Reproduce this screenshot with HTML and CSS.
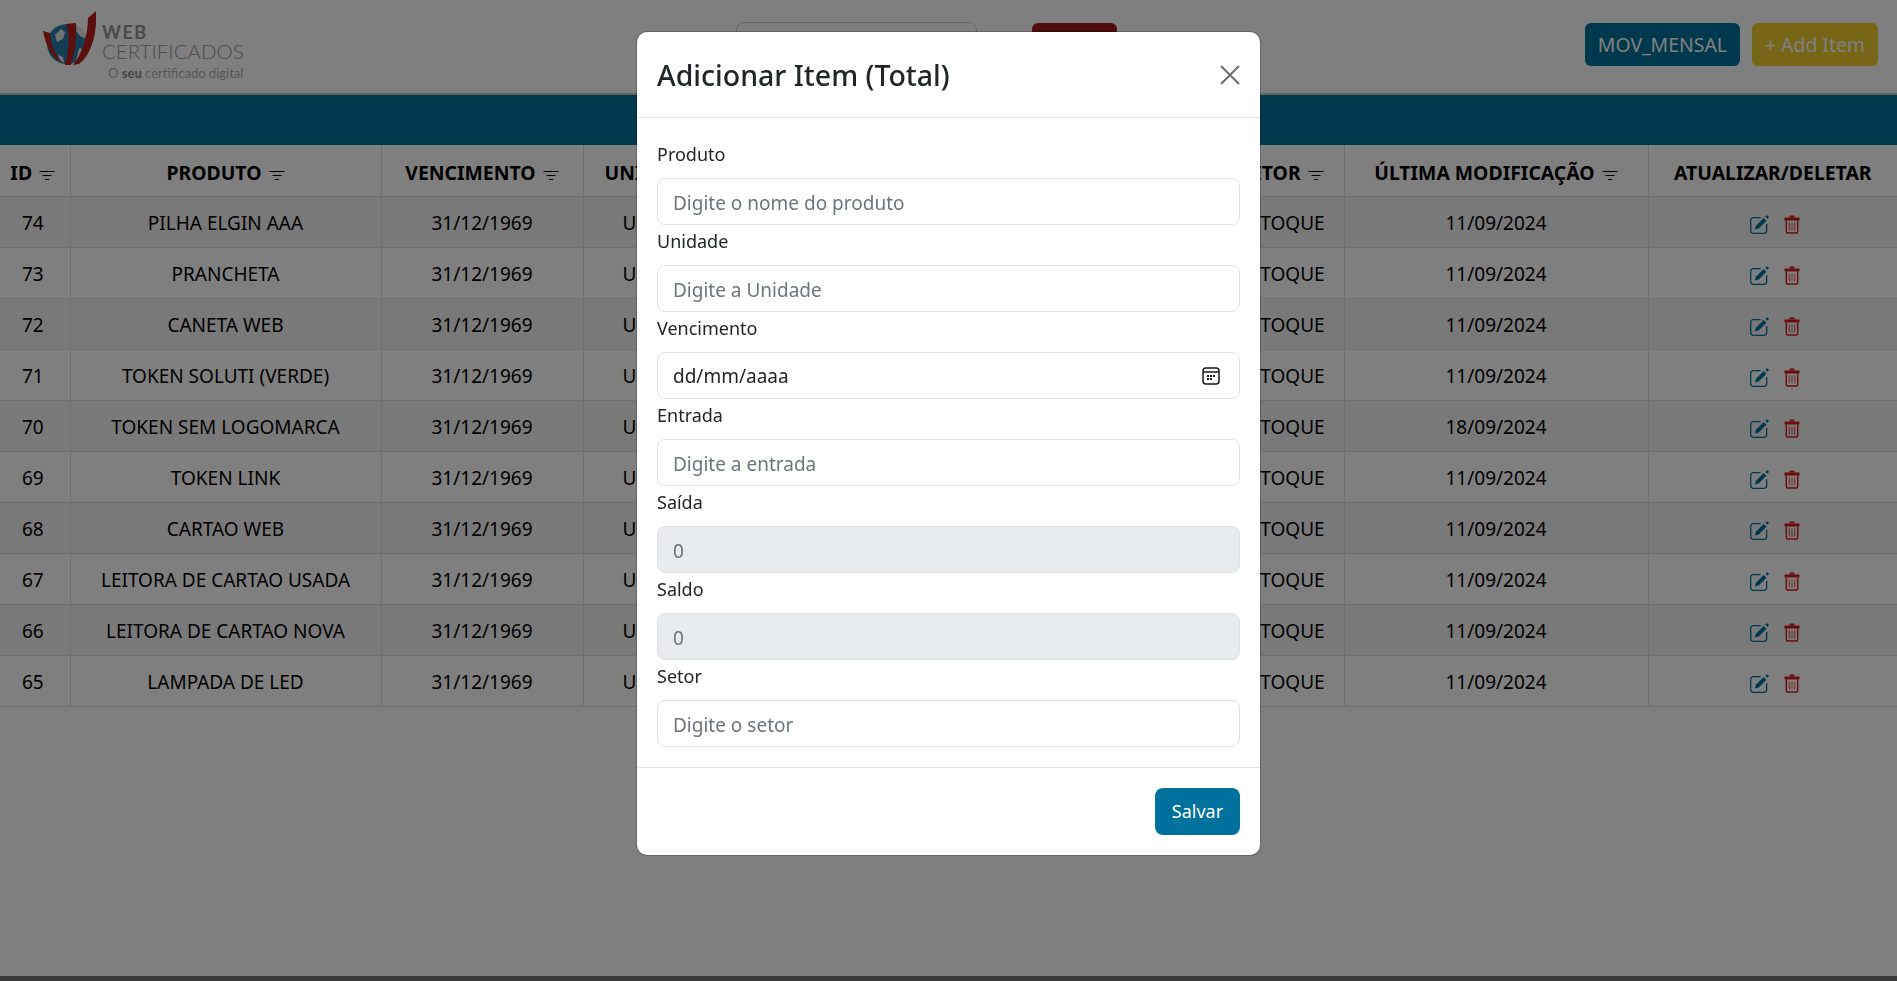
FILE: index.html
```html
<!DOCTYPE html>
<html lang="pt-BR">
<head>
<meta charset="UTF-8">
<meta name="viewport" content="width=device-width, initial-scale=1.0">
<title>Web Certificados - Estoque</title>
<link rel="stylesheet" href="styles.css">
</head>
<body>

<svg class="sprites" width="0" height="0">
    <symbol id="i-filter" viewBox="0 0 16 16">
        <path d="M0.500 4.500h15M3.500 8.500h9M6 12.500h4" fill="none" stroke="currentColor" stroke-width="1.200"/>
    </symbol>
    <symbol id="i-edit" viewBox="0 0 18 18">
        <path d="M10 2.500H3A2.300 2.300 0 0 0 0.700 4.800V15a2.300 2.300 0 0 0 2.300 2.300h10.500a2.300 2.300 0 0 0 2.300-2.300V8.500" fill="none" stroke="currentColor" stroke-width="1.200"/>
        <path d="M13 2.800l2.600 2.600-7.400 7.400-3.600 1 1-3.600z" fill="currentColor"/>
        <circle cx="16.300" cy="1.800" r="1.400" fill="currentColor"/>
    </symbol>
    <symbol id="i-trash" viewBox="0 0 16 19">
        <path d="M5.500 0.500h5v2h-5z" fill="currentColor"/>
        <path d="M0.500 2.500h15v3h-15z" fill="currentColor"/>
        <path d="M2.300 5.500v11a1.500 1.500 0 0 0 1.500 1.500h8.400a1.500 1.500 0 0 0 1.500-1.500v-11" fill="none" stroke="currentColor" stroke-width="1.400"/>
        <path d="M5.300 7.500v8M8 7.500v8M10.700 7.500v8" fill="none" stroke="currentColor" stroke-width="1.300" opacity=".6"/>
    </symbol>
</svg>

<div class="page">
    <nav class="navbar">
        <div class="logo">
            <svg class="logo-mark" viewBox="0 0 53 54">
                <circle cx="24" cy="33" r="20" fill="#267ca8"/>
                <path d="M12 24l6-6 4 3-2 7-6 3zM33 15l7 3 3 10-6-3-4-5zM15 44l5 2 1 6-4-2zM36 37l4 1-5 11-2 1z" fill="#e4e4e4"/>
                <path d="M0 20l7 2c1 12 5 22 13 30C10 48 3 36 0 20z" fill="#b81e1e"/>
                <path d="M23 13l10-1c1 16-1 30-5 42l-6 0c4-14 5-28 1-41z" fill="#b81e1e"/>
                <path d="M53 0c1 20-3 42-17 53l-6 1c10-12 15-32 15-47z" fill="#b81e1e"/>
            </svg>
            <div class="logo-text">
                <span class="logo-web">WEB</span>
                <span class="logo-cert">CERTIFICADOS</span>
                <span class="logo-tag">O <b>seu</b> certificado digital</span>
            </div>
        </div>
        <input class="nav-search" type="text">
        <button class="nav-red">Buscar</button>
        <div class="nav-actions">
            <button class="btn btn-primary">MOV_MENSAL</button>
            <button class="btn btn-yellow">+ Add Item</button>
        </div>
    </nav>

    <div class="band"></div>

    <table class="stock">
        <thead>
            <tr>
                <th class="col-id">ID <svg class="filter"><use href="#i-filter"/></svg></th>
                <th class="col-prod">PRODUTO <svg class="filter"><use href="#i-filter"/></svg></th>
                <th class="col-venc">VENCIMENTO <svg class="filter"><use href="#i-filter"/></svg></th>
                <th class="col-uni">UNIDADE <svg class="filter"><use href="#i-filter"/></svg></th>
                <th class="col-num">ENTRADA <svg class="filter"><use href="#i-filter"/></svg></th>
                <th class="col-num">SAÍDA <svg class="filter"><use href="#i-filter"/></svg></th>
                <th class="col-setor">SETOR <svg class="filter"><use href="#i-filter"/></svg></th>
                <th class="col-mod">ÚLTIMA MODIFICAÇÃO <svg class="filter"><use href="#i-filter"/></svg></th>
                <th class="col-act">ATUALIZAR/DELETAR</th>
            </tr>
        </thead>
        <tbody>
            <tr><td>74</td><td>PILHA ELGIN AAA</td><td>31/12/1969</td><td>UNIDADE</td><td>10</td><td>0</td><td>ESTOQUE</td><td>11/09/2024</td><td class="actions"><svg class="ic-edit"><use href="#i-edit"/></svg><svg class="ic-trash"><use href="#i-trash"/></svg></td></tr>
            <tr><td>73</td><td>PRANCHETA</td><td>31/12/1969</td><td>UNIDADE</td><td>10</td><td>0</td><td>ESTOQUE</td><td>11/09/2024</td><td class="actions"><svg class="ic-edit"><use href="#i-edit"/></svg><svg class="ic-trash"><use href="#i-trash"/></svg></td></tr>
            <tr><td>72</td><td>CANETA WEB</td><td>31/12/1969</td><td>UNIDADE</td><td>10</td><td>0</td><td>ESTOQUE</td><td>11/09/2024</td><td class="actions"><svg class="ic-edit"><use href="#i-edit"/></svg><svg class="ic-trash"><use href="#i-trash"/></svg></td></tr>
            <tr><td>71</td><td>TOKEN SOLUTI (VERDE)</td><td>31/12/1969</td><td>UNIDADE</td><td>10</td><td>0</td><td>ESTOQUE</td><td>11/09/2024</td><td class="actions"><svg class="ic-edit"><use href="#i-edit"/></svg><svg class="ic-trash"><use href="#i-trash"/></svg></td></tr>
            <tr><td>70</td><td>TOKEN SEM LOGOMARCA</td><td>31/12/1969</td><td>UNIDADE</td><td>10</td><td>0</td><td>ESTOQUE</td><td>18/09/2024</td><td class="actions"><svg class="ic-edit"><use href="#i-edit"/></svg><svg class="ic-trash"><use href="#i-trash"/></svg></td></tr>
            <tr><td>69</td><td>TOKEN LINK</td><td>31/12/1969</td><td>UNIDADE</td><td>10</td><td>0</td><td>ESTOQUE</td><td>11/09/2024</td><td class="actions"><svg class="ic-edit"><use href="#i-edit"/></svg><svg class="ic-trash"><use href="#i-trash"/></svg></td></tr>
            <tr><td>68</td><td>CARTAO WEB</td><td>31/12/1969</td><td>UNIDADE</td><td>10</td><td>0</td><td>ESTOQUE</td><td>11/09/2024</td><td class="actions"><svg class="ic-edit"><use href="#i-edit"/></svg><svg class="ic-trash"><use href="#i-trash"/></svg></td></tr>
            <tr><td>67</td><td>LEITORA DE CARTAO USADA</td><td>31/12/1969</td><td>UNIDADE</td><td>10</td><td>0</td><td>ESTOQUE</td><td>11/09/2024</td><td class="actions"><svg class="ic-edit"><use href="#i-edit"/></svg><svg class="ic-trash"><use href="#i-trash"/></svg></td></tr>
            <tr><td>66</td><td>LEITORA DE CARTAO NOVA</td><td>31/12/1969</td><td>UNIDADE</td><td>10</td><td>0</td><td>ESTOQUE</td><td>11/09/2024</td><td class="actions"><svg class="ic-edit"><use href="#i-edit"/></svg><svg class="ic-trash"><use href="#i-trash"/></svg></td></tr>
            <tr><td>65</td><td>LAMPADA DE LED</td><td>31/12/1969</td><td>UNIDADE</td><td>10</td><td>0</td><td>ESTOQUE</td><td>11/09/2024</td><td class="actions"><svg class="ic-edit"><use href="#i-edit"/></svg><svg class="ic-trash"><use href="#i-trash"/></svg></td></tr>
        </tbody>
    </table>

    <footer class="footer"></footer>
</div>

<div class="backdrop">
    <div class="modal">
        <div class="modal-header">
            <h2 class="modal-title">Adicionar Item (Total)</h2>
            <svg class="modal-close" viewBox="0 0 20 20"><path d="M1 1l18 18M19 1L1 19" fill="none" stroke="currentColor" stroke-width="2"/></svg>
        </div>
        <form class="modal-body">
            <label for="produto">Produto</label>
            <input class="form-control" id="produto" type="text" placeholder="Digite o nome do produto">
            <label for="unidade">Unidade</label>
            <input class="form-control" id="unidade" type="text" placeholder="Digite a Unidade">
            <label for="vencimento">Vencimento</label>
            <div class="form-control date-field" id="vencimento">
                <span>dd/mm/aaaa</span>
                <svg class="cal" viewBox="0 0 18 18">
                    <rect x="1" y="1" width="16" height="16" rx="3" fill="none" stroke="#1a1a1a" stroke-width="1.500"/>
                    <path d="M1 5h16" stroke="#1a1a1a" stroke-width="1.500"/>
                    <path d="M5 8h2v2H5zM8 8h2v2H8zM11 8h2v2h-2zM5 11h2v2H5zM8 11h2v2H8z" fill="#1a1a1a"/>
                </svg>
            </div>
            <label for="entrada">Entrada</label>
            <input class="form-control" id="entrada" type="text" placeholder="Digite a entrada">
            <label for="saida">Saída</label>
            <input class="form-control" id="saida" type="text" value="0" disabled>
            <label for="saldo">Saldo</label>
            <input class="form-control" id="saldo" type="text" value="0" disabled>
            <label for="setor">Setor</label>
            <input class="form-control" id="setor" type="text" placeholder="Digite o setor">
        </form>
        <div class="modal-footer">
            <button class="btn btn-primary btn-save">Salvar</button>
        </div>
    </div>
</div>

</body>
</html>
```

FILE: styles.css
```css
* {
    box-sizing: border-box;
}
body {
    margin: 0;
    background-color: #fff;
    color: #000;
    font-family: "Noto Sans", "Open Sans", Arial, sans-serif;
    font-size: 18px;
    line-height: 27px;
    overflow: hidden;
}
.sprites {
    position: absolute;
}
.page {
    display: flex;
    flex-direction: column;
    height: 981px;
}

/* top bar */
.navbar {
    display: flex;
    align-items: flex-start;
    height: 95px;
    padding: 23px 19px 0 43px;
    border-bottom: 2px solid #c8c8c8;
}
.logo {
    display: flex;
    width: 201px;
    margin-top: -12px;
}
.logo-mark {
    width: 53px;
    height: 54px;
    flex: none;
}
.logo-text {
    display: flex;
    flex-direction: column;
    margin: 12px 0 0 6px;
    color: #a8a8a8;
    font-family: Lato, sans-serif;
    white-space: nowrap;
}
.logo-web {
    font-size: 18px;
    line-height: 18px;
    font-weight: 700;
    letter-spacing: 1.500px;
    color: #969696;
}
.logo-cert {
    font-size: 20.500px;
    line-height: 20px;
    font-weight: 300;
    color: #9a9a9a;
}
.logo-tag {
    font-size: 13px;
    line-height: 16px;
    margin: 4px 0 0 6px;
    color: #b0b0b0;
}
.logo-tag b {
    color: #8a8a8a;
}
.nav-search {
    width: 241px;
    height: 47px;
    margin: -1px 0 0 492px;
    border: 1px solid #ccc;
    border-radius: 8px;
}
.nav-red {
    width: 85px;
    height: 43px;
    margin-left: 55px;
    border: none;
    border-radius: 6px;
    background-color: #9e1818;
    color: #fff;
    font: inherit;
}
.nav-actions {
    display: flex;
    gap: 12px;
    margin-left: auto;
}
.btn {
    height: 43px;
    padding: 0 13px;
    border: none;
    border-radius: 6px;
    color: #fff;
    font: inherit;
    font-size: 19.400px;
    white-space: nowrap;
}
.btn-primary {
    background-color: #00709c;
}
.btn-yellow {
    background-color: #eecc30;
}

.band {
    height: 50px;
    background-color: #00709c;
}

/* table */
.stock {
    width: 100%;
    border-collapse: collapse;
    table-layout: fixed;
    text-align: center;
    font-size: 19px;
}
.stock th,
.stock td {
    height: 51px;
    padding: 4px 0 0;
    border: 1px solid #dedede;
    border-top: none;
    white-space: nowrap;
    overflow: hidden;
}
.stock th {
    font-size: 19.400px;
}
.stock th:first-child,
.stock td:first-child {
    border-left: none;
    padding-right: 4px;
}
.stock th:nth-child(4),
.stock td:nth-child(4) {
    text-align: left;
}
.stock th:nth-child(4) {
    padding-left: 21px;
}
.stock td:nth-child(4) {
    padding-left: 39px;
}
.stock th:last-child,
.stock td:last-child {
    border-right: none;
}
.stock tbody tr:nth-child(odd) {
    background-color: #f2f2f2;
}
.col-id { width: 70px; }
.col-prod { width: 311px; }
.col-venc { width: 202px; }
.col-uni { width: 175px; }
.col-num { width: 231px; }
.col-setor { width: 124px; }
.col-mod { width: 304px; }
.col-act { width: 249px; }
.filter {
    width: 16px;
    height: 16px;
    margin-left: 2px;
    vertical-align: -3px;
}
.stock td.actions {
    padding-left: 4px;
}
.actions svg {
    vertical-align: -4px;
}
.ic-edit {
    width: 19px;
    height: 19px;
    margin-right: 15px;
    color: #00709c;
}
.ic-trash {
    width: 16px;
    height: 19px;
    color: #d81a1a;
}
.footer {
    height: 5px;
    margin-top: auto;
    background-color: #777;
}

/* modal */
.backdrop {
    position: fixed;
    inset: 0;
    display: flex;
    justify-content: center;
    align-items: flex-start;
    padding-top: 32px;
    background-color: rgba(0, 0, 0, 0.5);
}
.modal {
    width: 623px;
    border-radius: 10px;
    background-color: #fff;
    color: #212529;
    box-shadow: 0 0 0 1px rgba(0, 0, 0, 0.2);
}
.modal-header {
    display: flex;
    align-items: center;
    justify-content: space-between;
    height: 86px;
    padding: 0 20px;
    border-bottom: 1px solid #dee2e6;
}
.modal-title {
    margin: 0;
    font-size: 28.500px;
    line-height: 42px;
    font-weight: 500;
}
.modal-close {
    width: 20px;
    height: 20px;
    color: #6e6e6e;
}
.modal-body {
    display: flex;
    flex-direction: column;
    padding: 23px 20px 20px;
}
.modal-body label {
    margin-bottom: 10px;
}
.form-control {
    width: 100%;
    height: 47px;
    margin-bottom: 3px;
    padding: 2px 15px 0;
    border: 1px solid #dee2e6;
    border-radius: 8px;
    background-color: #fff;
    color: #212529;
    font: inherit;
    font-size: 19px;
}
.form-control:last-child {
    margin-bottom: 0;
}
.form-control::placeholder {
    color: #6c757d;
}
.form-control:disabled {
    background-color: #e9ecef;
    color: #6c757d;
}
.date-field {
    display: flex;
    align-items: center;
    justify-content: space-between;
}
.cal {
    width: 18px;
    height: 18px;
    margin: -2px 4px 0 0;
}
.modal-footer {
    display: flex;
    justify-content: flex-end;
    padding: 20px;
    border-top: 1px solid #dee2e6;
}
.btn-save {
    width: 85px;
    height: 47px;
    padding: 0;
    border-radius: 8px;
    font-size: 18px;
}
```
